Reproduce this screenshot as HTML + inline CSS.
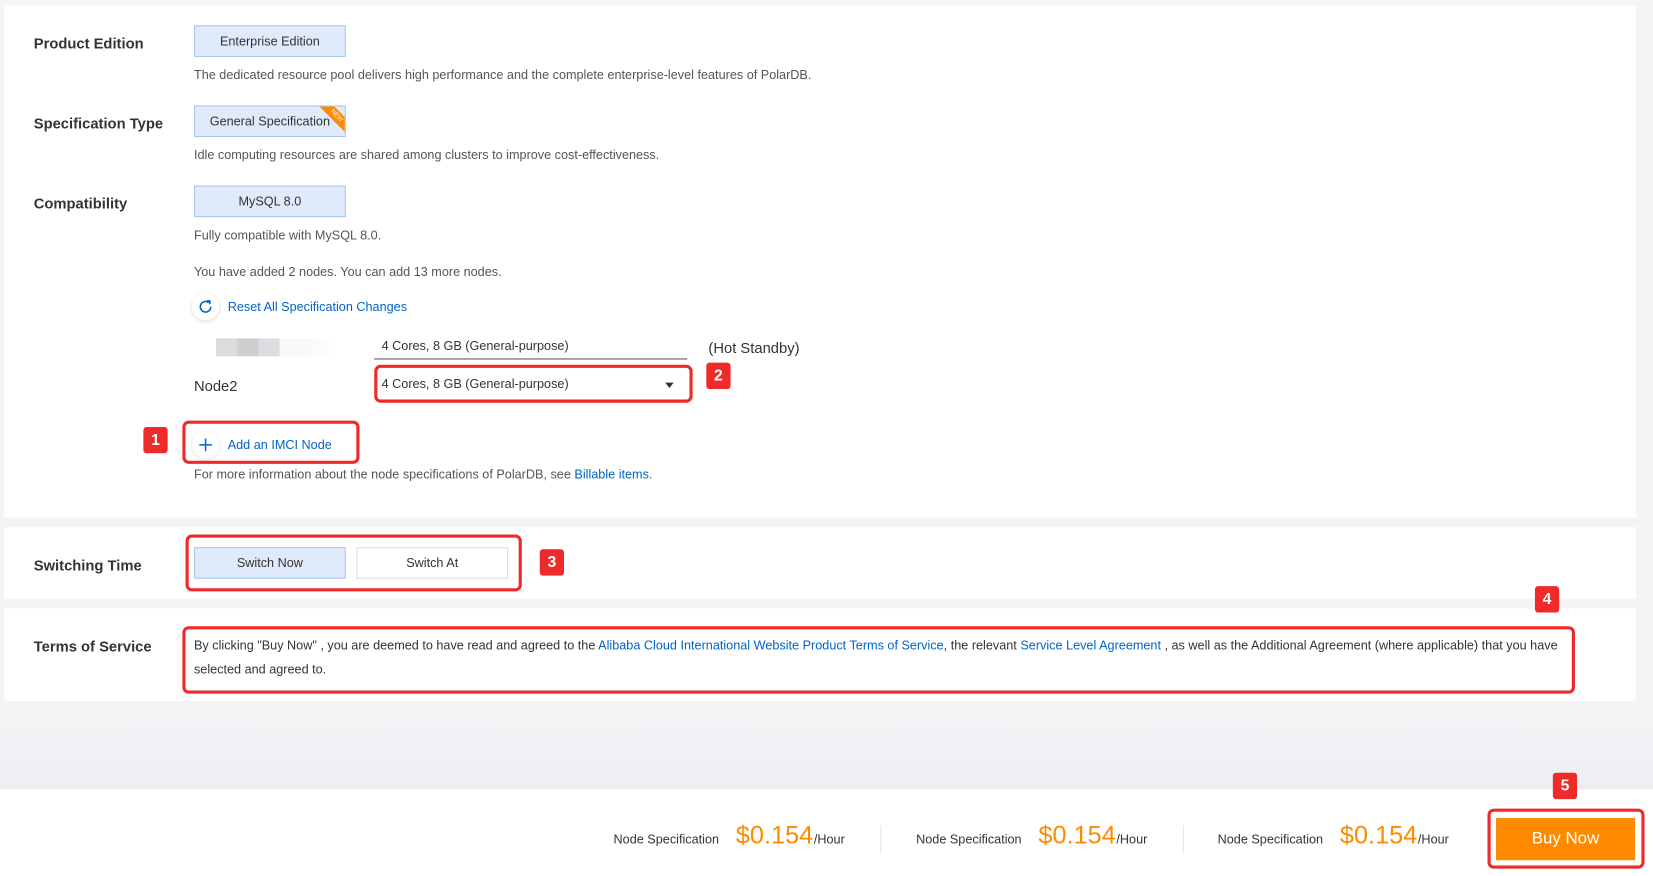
<!DOCTYPE html>
<html><head><meta charset="utf-8"><style>
*{box-sizing:border-box;margin:0;padding:0}
body{width:1653px;height:876px;overflow:hidden;background:#f3f4f6;font-family:"Liberation Sans",Arial,sans-serif;color:#333}
#w{position:absolute;left:0;top:0;width:1568px;height:831px;transform:scale(1.05421);transform-origin:0 0;background:linear-gradient(#f3f4f6 0,#f3f4f6 680px,#eceef1 749px)}
.a{position:absolute;white-space:nowrap}
.card{position:absolute;background:#fff;left:4px;width:1548px}
.lab{font-size:14px;font-weight:bold;color:#333}
.btn{position:absolute;width:144px;height:30px;background:#dfeafa;border:1px solid #a9c8ef;font-size:12px;line-height:28px;text-align:center;color:#333}
.d{font-size:12px;color:#555}
.rb{position:absolute;border:3px solid #ee2a2a;border-radius:6px}
.bd{position:absolute;width:23px;height:25px;background:#ee2a2a;border-radius:3px;color:#fff;font-size:15px;font-weight:bold;text-align:center;line-height:25px}
.lk{color:#0064c8}
.ns{font-size:12px;color:#333}
.pr{font-size:24px;color:#ff8a00}
</style></head><body><div id="w">
<div class="card" style="top:5px;height:486px"></div>
<div class="card" style="top:500px;height:68px"></div>
<div class="card" style="top:577px;height:88px"></div>
<div style="position:absolute;left:0;top:749px;width:1568px;height:82px;background:#fff"></div>

<div class="a lab" style="left:32px;top:33px">Product Edition</div>
<div class="btn" style="left:184px;top:24px">Enterprise Edition</div>
<div class="a d" style="left:184px;top:64px">The dedicated resource pool delivers high performance and the complete enterprise-level features of PolarDB.</div>

<div class="a lab" style="left:32px;top:109px">Specification Type</div>
<div class="btn" style="left:184px;top:100px;overflow:hidden">General Specification
<div style="position:absolute;right:-14px;top:4px;width:44px;height:10px;background:#ff8a00;transform:rotate(45deg);font-size:6px;line-height:10px;color:#fff">NEW</div></div>
<div class="a d" style="left:184px;top:140px">Idle computing resources are shared among clusters to improve cost-effectiveness.</div>

<div class="a lab" style="left:32px;top:185px">Compatibility</div>
<div class="btn" style="left:184px;top:176px">MySQL 8.0</div>
<div class="a d" style="left:184px;top:216px">Fully compatible with MySQL 8.0.</div>
<div class="a d" style="left:184px;top:251px">You have added 2 nodes. You can add 13 more nodes.</div>

<div style="position:absolute;left:182px;top:278px;width:26px;height:26px;border-radius:50%;background:#fff;box-shadow:0 1px 4px rgba(0,0,0,.15)"></div>
<svg class="a" style="left:187px;top:283px" width="16" height="16" viewBox="0 0 16 16"><path d="M13 8a5 5 0 1 1-2-4" fill="none" stroke="#0064c8" stroke-width="1.5"/><path d="M9 2.5h3v3" fill="none" stroke="#0064c8" stroke-width="1.5"/></svg>
<div class="a lk" style="left:216px;top:284px;font-size:12px">Reset All Specification Changes</div>

<div style="position:absolute;left:205px;top:321px;width:117px;height:17px;background:linear-gradient(90deg,#dcdcdc 0 20px,#cfcfcf 20px 40px,#dcdde0 40px 60px,#f8f8f8 60px 80px,#fff 117px)"></div>
<div class="a" style="left:362px;top:321px;font-size:12px">4 Cores, 8 GB (General-purpose)</div>
<div style="position:absolute;left:355px;top:340px;width:297px;height:1px;background:#555"></div>
<div class="a" style="left:672px;top:322px;font-size:14px">(Hot Standby)</div>

<div class="a" style="left:184px;top:358px;font-size:14px">Node2</div>
<div class="rb" style="left:355px;top:346px;width:302px;height:36px"></div>
<div class="a" style="left:362px;top:357px;font-size:12px">4 Cores, 8 GB (General-purpose)</div>
<div style="position:absolute;left:631px;top:363px;border:4px solid transparent;border-top:5px solid #333;border-bottom:0"></div>
<div class="bd" style="left:670px;top:344px">2</div>

<div class="bd" style="left:136px;top:405px">1</div>
<div class="rb" style="left:173px;top:399px;width:168px;height:41px"></div>
<div style="position:absolute;left:182px;top:409px;width:26px;height:26px;border-radius:50%;background:#fff;box-shadow:0 1px 4px rgba(0,0,0,.12)"></div>
<svg class="a" style="left:188px;top:415px" width="14" height="14"><path d="M7 1v12M1 7h12" stroke="#0064c8" stroke-width="1.4"/></svg>
<div class="a lk" style="left:216px;top:415px;font-size:12px">Add an IMCI Node</div>
<div class="a d" style="left:184px;top:443px">For more information about the node specifications of PolarDB, see <span class="lk">Billable items</span>.</div>

<div class="a lab" style="left:32px;top:528px">Switching Time</div>
<div class="rb" style="left:176px;top:507px;width:319px;height:54px"></div>
<div class="btn" style="left:184px;top:519px">Switch Now</div>
<div class="btn" style="left:338px;top:519px;background:#fff;border-color:#ddd">Switch At</div>
<div class="bd" style="left:512px;top:521px">3</div>
<div class="bd" style="left:1456px;top:556px">4</div>

<div class="a lab" style="left:32px;top:605px">Terms of Service</div>
<div class="rb" style="left:173px;top:594px;width:1321px;height:64px"></div>
<div class="a" style="left:184px;top:605px;font-size:12px">By clicking "Buy Now" , you are deemed to have read and agreed to the <span class="lk">Alibaba Cloud International Website Product Terms of Service</span>, the relevant <span class="lk">Service Level Agreement</span> , as well as the Additional Agreement (where applicable) that you have</div>
<div class="a" style="left:184px;top:628px;font-size:12px">selected and agreed to.</div>

<div class="a ns" style="left:582px;top:789px">Node Specification</div>
<div class="a pr" style="left:698px;top:779px">$0.154</div>
<div class="a ns" style="left:772px;top:789px">/Hour</div>
<div style="position:absolute;left:835px;top:783px;width:1px;height:26px;background:#e5e5e5"></div>
<div class="a ns" style="left:869px;top:789px">Node Specification</div>
<div class="a pr" style="left:985px;top:779px">$0.154</div>
<div class="a ns" style="left:1059px;top:789px">/Hour</div>
<div style="position:absolute;left:1122px;top:783px;width:1px;height:26px;background:#e5e5e5"></div>
<div class="a ns" style="left:1155px;top:789px">Node Specification</div>
<div class="a pr" style="left:1271px;top:779px">$0.154</div>
<div class="a ns" style="left:1345px;top:789px">/Hour</div>

<div class="bd" style="left:1473px;top:733px">5</div>
<div class="rb" style="left:1411px;top:767px;width:149px;height:57px"></div>
<div style="position:absolute;left:1419px;top:776px;width:132px;height:40px;background:#ff8a00;color:#fff;font-size:16px;text-align:center;line-height:40px">Buy Now</div>
</div></body></html>
